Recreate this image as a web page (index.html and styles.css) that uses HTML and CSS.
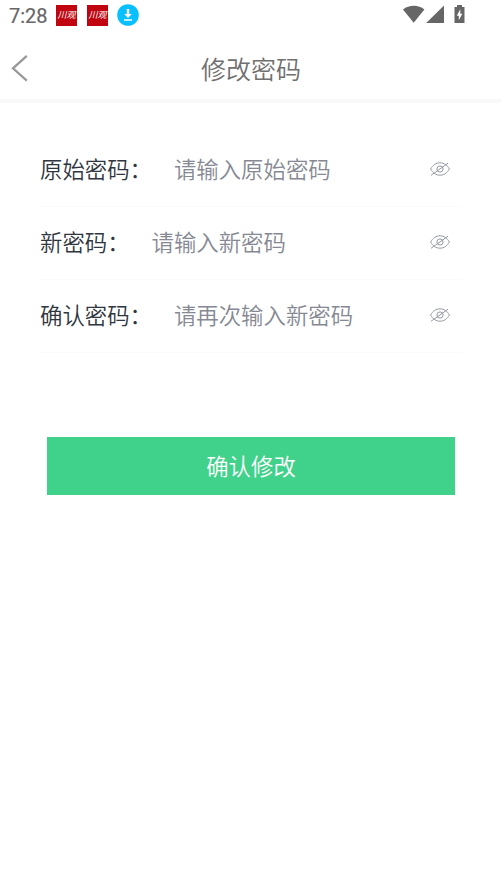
FILE: index.html
```
<!DOCTYPE html>
<html lang="zh-CN">
<head>
<meta charset="utf-8">
<meta name="viewport" content="width=device-width, initial-scale=1">
<title>修改密码</title>
<link rel="stylesheet" href="styles.css">
</head>
<body>
<svg width="0" height="0" class="defs" aria-hidden="true">
  <symbol id="eye-off" viewBox="0 0 20 16">
    <path d="M.6 8C3 4 6 1.8 10 1.8S17 4 19.4 8C17 12 14 14.2 10 14.2S3 12 .6 8Z"/>
    <circle cx="10" cy="8" r="3.1"/>
    <path d="M1 14.3 18 2.2"/>
  </symbol>
</svg>
<div class="status">
  <span class="time">7:28</span>
  <span class="app">川观</span>
  <span class="app">川观</span>
  <svg class="download" viewBox="0 0 22 22"><circle cx="11" cy="11" r="10.8" fill="#08bfff"/><path d="M9.8 5h2.4v5h2.6L11 14 7.2 10h2.6ZM7 15.2h8v1.5H7Z" fill="#fff"/></svg>
  <svg class="system" viewBox="0 0 64 20"><g fill="#666">
    <path d="M0 4.4C6-.6 15.5-.6 21.4 4.4L10.7 17.8Z"/>
    <path d="M41 .4V18H23.2Z"/>
    <path d="M54 0h5v2h2.5v16h-10V2H54Z"/></g>
    <path d="M57.3 4.3v4.5h2l-3.5 6.4v-4.5h-2Z" fill="#fff"/>
  </svg>
</div>
<header class="header">
  <svg class="back" viewBox="0 0 18 28"><path d="M15.8 1.8 2 14.3 15.8 26.6"/></svg>
  <h1>修改密码</h1>
</header>
<main>
  <form class="form">
    <label class="row"><span>原始密码：</span><input type="password" placeholder="请输入原始密码"><svg class="eye"><use href="#eye-off"/></svg></label>
    <label class="row"><span>新密码：</span><input type="password" placeholder="请输入新密码"><svg class="eye"><use href="#eye-off"/></svg></label>
    <label class="row"><span>确认密码：</span><input type="password" placeholder="请再次输入新密码"><svg class="eye"><use href="#eye-off"/></svg></label>
    <button type="button" class="submit">确认修改</button>
  </form>
</main>
</body>
</html>
```
FILE: styles.css
```
* { box-sizing: border-box; }
body {
  margin: 0;
  min-height: 894px;
  background: #fff;
  font-family: "Noto Sans CJK SC DemiLight", "Noto Sans CJK SC", sans-serif;
  font-weight: 350;
}
.defs { position: absolute; }
.status {
  display: flex;
  align-items: center;
  height: 30px;
  padding: 0 37px 0 9px;
}
.time {
  width: 47px;
  padding-top: 1px;
  font: 400 20px/30px Roboto, sans-serif;
  color: #666;
  -webkit-text-stroke: .2px #666;
}
.app {
  width: 21px;
  height: 21px;
  margin-right: 10px;
  background: #c00510;
  color: #fff;
  font: italic 400 9px/20px "Noto Sans CJK SC", sans-serif;
  text-align: center;
}
.download { width: 22px; height: 22px; margin-left: -1px; }
.system { width: 64px; height: 20px; margin: 0 -2px 0 auto; }
.header {
  display: grid;
  grid-template-columns: 40px 1fr 40px;
  align-items: center;
  height: 73px;
  padding: 6px 11px 0;
  border-bottom: 4px solid #f9f9f9;
}
.back {
  width: 18px;
  height: 28px;
  fill: none;
  stroke: #999;
  stroke-width: 2.3;
}
.header h1 {
  margin: 0;
  font-size: 25px;
  font-weight: 350;
  line-height: 36px;
  text-align: center;
  color: #707070;
}
.form { padding: 31px 40px 0; }
.row {
  display: flex;
  align-items: center;
  height: 73px;
  border-bottom: 1px solid #fbfbfb;
  font-size: 22.4px;
  color: #303640;
}
.row span { flex: none; margin: -4px 22px 0 0; }
.row input {
  flex: 1;
  min-width: 0;
  margin: -4px 0 0;
  padding: 0;
  border: 0;
  outline: 0;
  background: none;
  font: inherit;
}
.row input::placeholder { color: #868993; opacity: 1; }
.eye {
  width: 20px;
  height: 16px;
  margin: -2px 12px 0 0;
  fill: none;
  stroke: #9599a4;
  stroke-width: 1;
}
.submit {
  display: block;
  width: 408px;
  height: 58px;
  margin: 84px 0 0 7px;
  padding: 0 0 1px;
  border: 0;
  background: #40d18b;
  color: #fff;
  font: 350 22.4px/57px "Noto Sans CJK SC DemiLight", "Noto Sans CJK SC", sans-serif;
}
```
